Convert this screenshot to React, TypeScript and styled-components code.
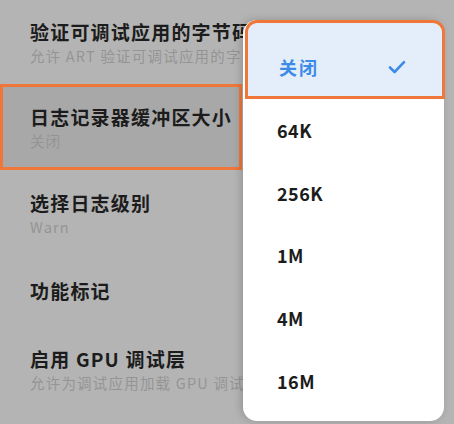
import React from "react";
import styled, { createGlobalStyle } from "styled-components";

interface SettingItem {
  title: string;
  summary?: string;
  height: number;
  focused?: boolean;
}

interface RowProps {
  $height: number;
  $focused?: boolean;
}

interface OptionProps {
  $selected?: boolean;
}

const settings: SettingItem[] = [
  { title: "验证可调试应用的字节码", summary: "允许 ART 验证可调试应用的字节码", height: 84 },
  { title: "日志记录器缓冲区大小", summary: "关闭", height: 86, focused: true },
  { title: "选择日志级别", summary: "Warn", height: 86 },
  { title: "功能标记", height: 70 },
  { title: "启用 GPU 调试层", summary: "允许为调试应用加载 GPU 调试层", height: 86 },
];

const options = ["关闭", "64K", "256K", "1M", "4M", "16M"];

const GlobalStyle = createGlobalStyle`
  html, body {
    margin: 0;
    padding: 0;
    background: #b4b4b4;
  }
  * {
    box-sizing: border-box;
  }
`;

export default function App() {
  return (
    <>
      <GlobalStyle />
      <Screen>
        <SettingsList>
          {settings.map((item) => (
            <Row key={item.title} $height={item.height} $focused={item.focused}>
              <Title>{item.title}</Title>
              {item.summary && <Summary>{item.summary}</Summary>}
            </Row>
          ))}
        </SettingsList>
        <Menu>
          {options.map((opt, i) => (
            <Option key={opt} $selected={i === 0}>
              <OptionLabel $selected={i === 0}>{opt}</OptionLabel>
              {i === 0 && (
                <svg width="18" height="14" viewBox="0 0 18 14">
                  <path
                    d="M2 7.5 L6.6 12 L16 2.2"
                    fill="none"
                    stroke="#3d8be6"
                    strokeWidth="2.6"
                    strokeLinecap="round"
                    strokeLinejoin="round"
                  />
                </svg>
              )}
            </Option>
          ))}
        </Menu>
      </Screen>
    </>
  );
}

const Screen = styled.div`
  position: relative;
  width: 454px;
  height: 424px;
  overflow: hidden;
  background: #b4b4b4;
  font-family: "Noto Sans CJK SC", "Noto Sans", sans-serif;
`;

const SettingsList = styled.div`
  display: flex;
  flex-direction: column;
`;

const Row = styled.div<RowProps>`
  height: ${(p) => p.$height}px;
  width: ${(p) => (p.$focused ? "242px" : "100%")};
  display: flex;
  flex-direction: column;
  justify-content: center;
  padding-left: ${(p) => (p.$focused ? "27px" : "30px")};
  background: ${(p) => (p.$focused ? "#a8a8a8" : "transparent")};
  border: ${(p) => (p.$focused ? "3px solid #f0773a" : "none")};
  white-space: nowrap;
  overflow: hidden;
`;

const Title = styled.div`
  font-size: 19px;
  font-weight: 700;
  line-height: 24px;
  letter-spacing: 1.2px;
  color: #1c1c1c;
`;

const Summary = styled.div`
  margin-top: 3px;
  font-size: 14.5px;
  line-height: 17px;
  letter-spacing: 1.2px;
  color: #949494;
`;

const Menu = styled.div`
  position: absolute;
  left: 243px;
  top: 20px;
  width: 201px;
  height: 401px;
  background: #ffffff;
  border-radius: 14px;
  box-shadow: -2px 0 8px rgba(0, 0, 0, 0.18);
  display: flex;
  flex-direction: column;
`;

const Option = styled.div<OptionProps>`
  height: ${(p) => (p.$selected ? "79px" : "62.6px")};
  padding: ${(p) => (p.$selected ? "14px 36px 0 31px" : "0 36px 0 34px")};
  display: flex;
  align-items: center;
  justify-content: space-between;
  background: ${(p) => (p.$selected ? "#e4eefb" : "transparent")};
  border: ${(p) => (p.$selected ? "3px solid #f0773a" : "none")};
  border-radius: ${(p) => (p.$selected ? "12px 12px 0 0" : "0")};
  margin: ${(p) => (p.$selected ? "0 -1px 0 2px" : "0")};
`;

const OptionLabel = styled.span<OptionProps>`
  font-size: 18px;
  font-weight: 700;
  letter-spacing: ${(p) => (p.$selected ? "2px" : "0.5px")};
  color: ${(p) => (p.$selected ? "#3d8be6" : "#1c1c1c")};
`;
